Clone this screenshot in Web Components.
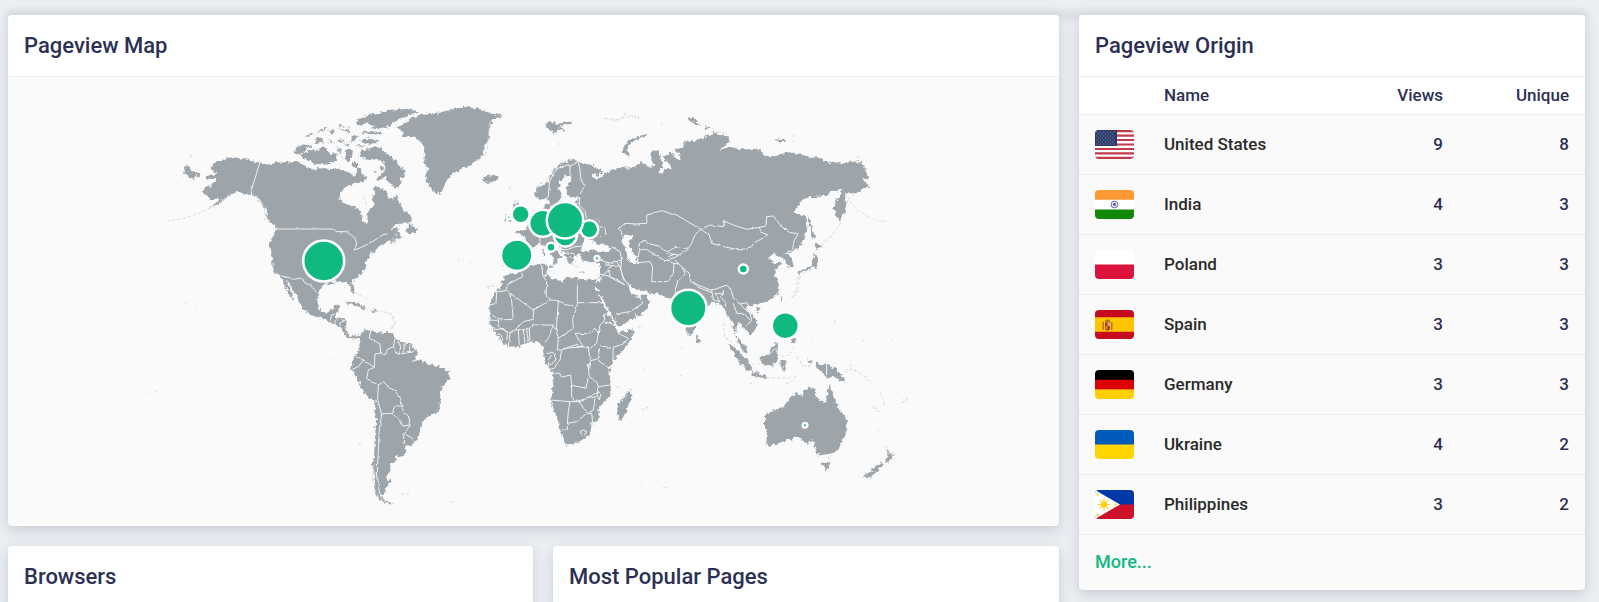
<!DOCTYPE html>
<html lang="en">
<head>
<meta charset="utf-8">
<title>Analytics</title>
<style>
    html {
        overflow: hidden;
    }

    body {
        margin: 0;
        background: #ebeff4;
        font-family: Roboto, "Liberation Sans", sans-serif;
        font-weight: 500;
        color: #2c3154;
    }
</style>
</head>
<body>

<stats-page>
    <stats-card slot="main" heading="Pageview Map">
        <world-map></world-map>
    </stats-card>
    <stats-card slot="half" heading="Browsers"></stats-card>
    <stats-card slot="half" heading="Most Popular Pages"></stats-card>
    <stats-card slot="side" heading="Pageview Origin">
        <origin-table></origin-table>
    </stats-card>
</stats-page>

<template id="stats-page">
    <style>
        :host {
            display: block;
            padding: 0 14px 0 8px;
        }

        .previous {
            height: 0;
            margin-bottom: 15px;
            box-shadow: 0 0 8px 2px rgba(40, 45, 50, .2);
        }

        .columns {
            display: grid;
            grid-template-columns: minmax(0, 1051fr) minmax(0, 506fr);
            gap: 20px;
            align-items: start;
        }

        .left {
            display: grid;
            gap: 20px;
        }

        .halves {
            display: grid;
            grid-template-columns: minmax(0, 525fr) minmax(0, 506fr);
            gap: 20px;
        }
    </style>
    <div class="previous"></div>
    <div class="columns">
        <div class="left">
            <slot name="main"></slot>
            <div class="halves"><slot name="half"></slot></div>
        </div>
        <slot name="side"></slot>
    </div>
</template>

<template id="stats-card">
    <style>
        :host {
            display: block;
            background: #fafafa;
            border-radius: 4px;
            box-shadow: 0 5px 14px rgba(40, 45, 50, .16), 0 0 2px rgba(40, 45, 50, .06);
            overflow: hidden;
        }

        header {
            background: #fff;
            border-bottom: 1px solid #eee;
            padding: 17px 16px 16px;
        }

        h2 {
            margin: 0;
            font-size: 22px;
            line-height: 28px;
            font-weight: 500;
        }
    </style>
    <header><h2></h2></header>
    <slot></slot>
</template>

<template id="origin-table">
    <style>
        :host {
            display: block;
        }

        table {
            width: 100%;
            border-collapse: collapse;
            table-layout: fixed;
            font-size: 17px;
            line-height: 20px;
        }

        th, td {
            box-sizing: border-box;
            padding: 0 16px;
            text-align: left;
            font-weight: 500;
            border-bottom: 1px solid #ececec;
        }

        th {
            height: 37px;
            background: #fff;
        }

        td {
            height: 60px;
        }

        .flag {
            width: 69px;
            padding-right: 0;
        }

        .name {
            color: #2a2a2a;
        }

        .num {
            width: 126px;
            text-align: right;
        }

        footer {
            padding: 15px 16px 16px;
        }

        a {
            color: #10b981;
            font-size: 18px;
            line-height: 24px;
            text-decoration: none;
        }
    </style>
    <table>
        <thead>
            <tr>
                <th class="flag"></th>
                <th>Name</th>
                <th class="num">Views</th>
                <th class="num">Unique</th>
            </tr>
        </thead>
        <tbody></tbody>
    </table>
    <footer><a href="#">More...</a></footer>
</template>

<template id="country-flag">
    <style>
        :host {
            display: block;
            width: 39px;
            height: 29px;
            border-radius: 4px;
            overflow: hidden;
        }

        svg {
            display: block;
            width: 100%;
            height: 100%;
        }
    </style>
    <svg viewBox="0 0 39 29" preserveAspectRatio="none" aria-hidden="true"></svg>
</template>

<template id="world-map">
    <style>
        :host {
            display: block;
        }

        svg {
            display: block;
            width: 100%;
            height: auto;
        }

        .land {
            fill: #9da4aa;
            filter: url(#coast);
        }

        .sea {
            fill: #fafafa;
            filter: url(#coast);
        }

        .border {
            fill: none;
            stroke: #f2f3f3;
            stroke-width: 3;
            stroke-linejoin: round;
            filter: url(#line);
        }

        .faint {
            fill: none;
            stroke: #d6d9db;
            stroke-width: 4;
            stroke-dasharray: 5 3 2 6;
            filter: url(#line);
        }

        .specks {
            fill: none;
            stroke: #e3e5e6;
            stroke-dasharray: 2 3 1 6;
        }

        circle {
            fill: #10b981;
            stroke: #fff;
            stroke-width: 2.5;
        }
    </style>
    <svg viewBox="8 77 1051 449" role="img" aria-label="Pageviews by country">
        <defs>
            <filter id="coast" x="-5%" y="-5%" width="110%" height="110%" color-interpolation-filters="sRGB">
                <feTurbulence type="fractalNoise" baseFrequency=".09" numOctaves="3" seed="4" result="n"/>
                <feDisplacementMap in="SourceGraphic" in2="n" scale="17" xChannelSelector="R" yChannelSelector="G"/>
            </filter>
            <filter id="line" x="-5%" y="-5%" width="110%" height="110%" color-interpolation-filters="sRGB">
                <feTurbulence type="fractalNoise" baseFrequency=".06" numOctaves="1" seed="7" result="n"/>
                <feDisplacementMap in="SourceGraphic" in2="n" scale="9" xChannelSelector="R" yChannelSelector="G"/>
            </filter>
        </defs>

        <!-- North America -->
        <g transform="translate(150 90) scale(.33333)">
            <g class="land">
                <path d="M188 228L200 218 215 212 235 205 252 200 270 206 300 210 330 216 345 222 365 226 380 216 395 218 410 212 425 216 440 216 455 222 475 234 490 238 510 234 530 236 545 238 565 236 585 240 590 250 605 252 615 266 618 250 622 235 632 238 640 254 650 262 645 272 625 278 605 284 585 292 575 310 568 325 580 340 600 346 620 355 632 364 635 380 640 395 648 399 653 385 652 368 665 357 672 342 668 325 674 310 668 292 680 290 695 297 710 302 716 325 730 328 738 312 746 330 755 348 760 362 775 370 788 382 783 396 760 400 735 406 715 420 735 416 750 412 742 428 760 440 745 446 725 460 715 452 705 458 690 468 680 482 665 488 655 505 645 522 650 532 640 546 625 558 610 568 607 582 613 592 615 608 611 612 603 598 600 583 590 575 575 578 555 573 545 580 530 578 515 588 506 605 502 620 503 640 510 660 525 670 542 665 552 648 570 645 566 660 558 670 558 685 588 688 590 700 586 718 595 732 605 740 620 735 628 745 615 746 595 742 580 725 568 710 550 700 530 692 515 685 495 680 475 670 455 655 452 640 440 620 425 595 415 575 406 563 414 585 428 610 430 630 418 615 408 592 398 575 393 558 375 548 368 530 366 510 360 480 358 460 368 440 376 425 378 415 365 400 355 390 350 370 345 350 330 330 315 318 300 314 285 312 265 306 250 310 235 318 222 330 205 342 178 354 200 338 206 325 185 328 172 320 160 305 165 292 185 285 200 275 195 268 168 266 170 258 195 255 200 248 183 238 185 228zM108 226L118 230 130 244 148 250 145 258 135 260 132 270 122 262 102 248z"/>
                <path d="M680 172L695 178 710 190 730 203 742 222 768 242 762 260 748 262 755 285 738 294 720 282 705 262 690 268 678 270 695 250 708 238 700 220 682 206 665 208 640 204 628 196 634 178 650 184 662 172zM475 182L500 178 525 172 540 192 560 190 558 212 530 224 500 222 472 214 462 204 450 196zM430 190L440 168 462 163 486 168 466 180 450 196zM655 75L710 64 770 56 806 64 780 76 742 92 714 108 690 118 662 118 676 105 645 100 625 110 618 98 640 82zM620 84L645 80 650 96 632 104zM640 122L700 126 690 134 635 130zM635 150L690 150 680 160 640 160zM590 180L604 176 606 202 596 218 584 206zM605 138L622 140 612 152 604 160zM562 172L575 180 572 192 560 182zM495 146L515 142 520 156 498 160zM460 140L492 128 480 140zM500 122L532 112 525 122zM555 148L585 150 570 158zM538 120L556 122 545 134zM690 230L702 230 698 244zM564 104L584 106 570 112zM570 118L600 116 598 128zM535 148L550 152 545 160zM615 165L645 166 640 172zM610 216L625 220 622 235 608 228zM640 140L665 140 660 146zM585 160L596 162 592 172zM670 240L680 245 672 250z"/>
                <path d="M735 115L765 100 785 85 810 72 860 68 890 62 940 50 980 55 1005 62 1030 75 1060 76 1030 88 1022 105 1015 125 1018 145 1005 165 1002 185 992 203 980 210 965 225 940 232 925 245 905 255 890 270 880 290 873 312 855 305 840 295 830 275 825 255 835 235 820 215 825 195 822 175 812 155 795 140 775 138 755 138 762 125zM998 262L1012 258 1030 254 1046 262 1035 272 1015 280 1002 272zM785 396L790 412 800 418 798 430 782 428 766 428 776 410zM585 635L605 635 625 642 650 655 640 657 620 648 590 640zM660 660L680 658 688 664 668 666zM120 195L130 197 122 200z"/>
            </g>
            <path class="border" d="M330 216L300 314M380 417H548L560 425 590 425 605 436 616 446 620 462 612 480 630 474 650 464 675 450 695 436 712 430M394 558L415 562 430 568 455 564 466 580 480 580 488 595 500 606M540 692L545 675 556 672M560 688L552 698M588 690L568 700 572 708"/>
            <path class="faint" d="M52 395L100 385 150 368 200 345M318 318L335 340 350 380 356 396M322 330L345 355 346 390M108 226L96 262M600 600L640 620 655 628M700 665L728 675 735 700 725 715M750 400L738 432 720 462 745 446 765 440M640 320L652 350M470 138L540 118 600 110M500 160L580 156 640 150M560 170L580 210M1020 90L1010 190 980 212M822 190L830 250M210 340L240 312"/>
        </g>

        <!-- South America -->
        <g transform="translate(330 310) scale(.33333)">
            <path class="land" d="M105 60L120 58 135 65 165 68 190 70 195 85 215 98 245 103 262 125 258 148 300 162 335 172 355 185 358 205 345 222 332 240 332 275 322 305 305 315 285 325 275 340 272 365 262 385 248 405 225 408 230 425 222 437 198 440 195 458 180 460 185 475 175 490 170 505 182 515 170 530 165 550 150 555 165 570 190 580 170 580 145 565 132 530 137 505 128 470 133 430 135 380 138 330 135 275 115 262 98 240 85 215 72 190 63 175 68 155 75 135 88 120 90 75z"/>
            <path class="border" d="M122 60L118 85 138 95 150 102 152 130 135 132 133 172 100 150 75 135M100 150L85 170 68 178M133 172L115 180 110 205 130 218 145 225 162 215 175 232 195 242 212 265 216 288 195 288 185 310 155 312 143 270 145 225M135 275H142M150 125L165 135 172 118 190 110 195 85M190 110L202 132 225 130 248 125 258 118M202 95L212 110 208 130M222 100L222 128M240 102L238 128M216 288L220 305 235 318 242 345 218 348 212 332 185 310M242 345L222 370 220 400M222 370L250 388M155 312L148 360 145 420 142 480 145 530 152 560M245 155L258 148 270 150"/>
            <path class="faint" d="M132 460L128 510 138 550 165 578M128 470L145 520M215 552H238M360 574L372 580M130 0L180 10 195 40 180 58M88 398V402"/>
        </g>

        <!-- Europe and Turkey -->
        <g transform="translate(470 90) scale(.33333)">
            <g class="land">
                <path d="M197 322L195 300 215 288 235 275 245 250 260 232 280 215 305 208 330 215 350 222 385 235 398 248 380 255 362 250 372 268 390 262 410 250 425 240 440 235 470 232 470 480 440 488 430 492 415 515 392 520 360 516 335 510 332 490 322 492 312 500 305 525 290 505 276 478 258 462 245 462 262 485 278 500 266 506 255 525 248 500 228 468 205 462 186 475 180 520 160 540 105 536 100 505 108 462 165 462 168 445 140 424 165 418 185 402 205 385 216 360 230 340 240 345 245 365 280 350 310 345 328 322 300 322 290 310 290 290 306 262 290 255 270 275 266 300 276 318 262 340 245 352 234 335 232 320 215 332z"/>
                <path d="M133 335L148 335 150 355 172 380 170 395 135 400 145 378 132 355zM108 370L125 372 120 392 105 392zM225 100L250 96 262 102 290 96 305 95 300 102 275 104 268 112 290 124 265 118 255 132 242 120 228 112zM218 475L223 480 222 500 217 495zM235 525L250 528 248 536zM325 545L345 547 340 551z"/>
            </g>
            <path class="sea" d="M335 470L345 442 362 448 370 458 382 452 380 462 405 460 422 475 424 484 400 486 370 480 345 486 334 486z"/>
            <path class="border" d="M235 322L238 280 250 250 270 230 300 228 325 215M300 228V258M325 215L330 240 332 265 346 288 330 312M305 322L328 325 328 345 345 362 350 385M300 335L325 342M380 385L405 410 408 430 390 440M210 462V440M275 478L290 480 315 470 335 468M285 490L312 490M165 462L190 472M420 474L445 480 460 500 440 515M425 490L445 492 440 515 395 522"/>
            <path class="faint" d="M410 88L440 92 470 80 510 84M200 290L230 270 250 240 300 206M285 470L300 500 320 520M290 510L330 538M120 290L125 305M50 590L75 585M268 160V164"/>
        </g>

        <!-- Asia -->
        <g transform="translate(600 100) scale(.33333)">
            <g class="land">
                <path d="M0 235L20 225 60 205 100 202 122 186 150 203 165 195 155 180 150 165 158 152 175 152 178 170 190 190 188 205 175 215 185 222 195 205 222 208 212 195 200 185 190 170 200 160 215 158 235 180 242 178 235 160 220 150 250 142 255 125 290 120 320 110 340 98 355 103 385 110 388 122 375 135 358 150 390 140 420 148 455 150 480 148 490 165 510 172 530 168 555 158 580 158 610 165 640 175 665 175 685 190 700 185 735 190 760 183 785 190 798 212 805 238 785 235 800 252 812 260 795 262 770 280 735 280 738 310 735 335 722 362 708 345 700 325 705 305 718 290 728 265 710 275 695 268 685 285 655 290 612 292 600 310 582 335 605 345 620 355 622 385 615 410 600 435 585 450 565 460 578 485 580 502 570 508 560 490 552 474 535 472 525 460 505 475 520 490 545 488 525 510 530 535 538 560 535 575 515 595 490 608 470 612 450 620 442 610 435 625 452 640 468 660 470 682 452 705 442 692 430 682 415 665 410 682 408 705 425 725 438 755 425 745 410 720 402 695 400 670 390 652 380 645 375 625 360 610 340 605 325 615 315 635 290 670 280 695 272 712 260 690 245 655 215 620 210 590 200 595 180 582 150 578 130 570 105 568 80 545 84 560 98 584 120 592 130 580 152 605 130 640 55 682 45 660 15 610 -15 550 -2 545 0 520 0 480 40 440 15 425 0 400z"/>
                <path d="M65 160L72 140 85 120 110 110 145 102 140 108 110 118 92 130 80 150 88 168zM622 345L630 360 636 385 648 415 638 412 632 390 625 370zM645 430L665 437 655 445 645 442zM645 460L652 480 648 500 625 510 610 514 600 520 598 530 594 518 610 506 630 502 638 485zM262 55L280 50 290 65 305 75 290 75 270 64zM312 78L335 82 318 88zM525 118L545 116 565 122 550 126 530 124zM575 122L597 126 585 126zM0 205L10 212 0 225z"/>
            </g>
            <path class="sea" d="M65 415L80 405 98 408 85 425 95 450 108 470 110 490 95 488 82 470 78 445 68 430z"/>
            <path class="border" d="M68 408L58 385 75 370 110 372 140 370 140 345 185 332 230 345 275 372 302 388 285 405 275 430 265 445 225 440 205 455 190 450 178 438 150 432 135 420 118 428V450L140 448 160 462 195 482 225 472 265 448M112 488L150 485 158 500 155 545 200 545 220 520 222 490 200 482M112 488L118 452M302 388L330 375 370 380 370 362 400 375 440 388 478 382 480 395 505 405 460 430 455 440 420 450 370 440 335 430 328 405 302 388M478 382L498 378 500 350 520 348 545 380 570 398 592 400 580 430 578 448 550 462M225 480L245 500 268 520 272 545 330 570 345 568 380 555 395 572 400 595M245 500L255 520 235 540 222 580M222 490L235 492M280 545L290 560 335 578M335 570L340 600 360 605 345 580 372 582M372 570L365 590 378 620M400 595L420 612 440 608M400 610L410 640 432 640 450 660M420 612L432 625 450 640 455 660 440 678M35 440L60 455 65 480 62 510 75 545M0 480L30 490 65 480M0 535L30 505 40 490M20 525L45 540 75 555M48 642L90 635 128 610 120 592M105 640L112 655M0 380L15 385 18 405M200 460L235 465M205 470L225 462"/>
            <path class="faint" d="M15 55L60 58 75 42 120 52M735 280L770 330 820 358 860 365M722 370L700 400 665 435M600 530L590 570 570 595M740 300L745 320M350 98L380 100M185 70V74M775 168V172M582 105V110"/>
        </g>

        <!-- Africa -->
        <g transform="translate(480 250) scale(.33333)">
            <path class="land" d="M75 78L90 68 115 70 140 50 190 40 200 45 205 60 195 75 225 88 245 95 258 80 290 85 330 90 352 88 345 102 355 130 370 165 385 190 400 220 415 245 435 245 462 238 455 265 435 295 400 330 388 355 390 385 393 430 375 455 355 475 358 505 340 520 325 555 300 575 258 585 248 565 240 540 230 500 212 455 220 410 215 365 195 335 190 290 175 275 150 275 120 288 85 290 60 270 40 240 28 220 30 190 28 165 40 135 60 110zM450 418L456 435 445 465 430 508 418 512 411 490 415 460 432 445z"/>
            <path class="border" d="M125 68L128 80 80 105 78 122 50 125 48 160 30 165M80 122L160 180 212 150 198 135 200 95 188 75 185 45M93 130L100 208 60 210 35 195M160 180L160 208 130 215 105 240 90 250M212 150L232 152 290 175 292 160 292 85M292 158H368M290 175L278 205 280 235 235 265 228 240 232 200 235 152M160 225H220L228 240M220 225L205 265 195 278M235 265L232 300 245 300 285 285 310 290 285 250M285 250L300 250 325 252 345 235 355 250 350 280 330 295M355 250L360 225 372 215 408 225M372 215L370 195 380 190M360 290L385 295 400 292 430 282 445 265 415 250 410 235M400 292L398 335M355 295L358 325 332 332 325 350 328 380 350 395 355 410 390 405M355 332L388 355M245 300L240 330 220 355 205 360M250 295L325 290 330 330M195 310H225L228 330 210 345 205 330 215 315M215 368L240 370 242 382 272 375 275 405 318 415 325 385M275 405V440L285 455 325 445 345 430 355 430M212 450L270 455 300 455M270 455L265 485 262 520 262 540 245 540M262 520L290 515 320 490 335 490 338 520M300 455L310 475 325 488 340 480 345 445M325 445L350 440M355 410L350 430 358 450 363 435 352 425M30 210L55 212 60 235 90 248M30 230L45 235M40 240L70 235 82 250 80 270M52 255Q60 245 66 262T56 268M90 250L85 288M115 240L118 285M130 240L135 280M140 240L145 275M148 235L150 272M105 240L145 238 160 225M300 545L310 540 320 548 312 555 303 550zM330 520L338 517 338 527 332 528zM320 345L332 340 330 352zM385 60L392 80 435 105M360 72L392 80M410 35L420 50 430 85 440 98M375 45L420 48"/>
            <path class="faint" d="M20 112L42 108M410 410L425 415M485 480L505 472M475 230H485M490 355V358M95 440H98"/>
        </g>

        <!-- South-East Asia and Oceania -->
        <g transform="translate(660 240) scale(.33333)">
            <path class="land" d="M315 530L325 518 370 500 385 480 410 460 425 468 430 450 450 442 465 448 465 465 480 480 497 487 503 460 508 432 515 455 525 480 530 498 545 515 562 545 560 575 545 605 525 638 505 642 485 645 468 640 465 615 455 600 442 615 430 600 405 592 380 600 355 610 330 618 318 612 322 590 315 560zM488 668L511 668 506 688 494 690zM682 625L688 642 703 645 690 665 675 668 682 650zM660 668L670 676 642 704 622 717 611 711 638 688zM465 368L485 372 500 375 530 388 545 405 555 430 535 420 520 408 500 418 490 400 470 385zM440 358L458 362 455 370 442 366zM297 350L320 345 345 308 356 314 350 330 352 355 340 378 305 372zM205 312L227 325 257 355 278 382 275 394 260 390 238 365zM243 308L258 320 264 342 248 334zM273 396L320 406 320 415 276 408zM360 363L370 362 382 365 374 374 378 392 364 390zM108 283L120 295 118 308 108 307zM288 203L299 207 294 218zM361 167L367 175 362 187zM390 300L408 292 404 310 394 306z"/>
            <path class="border" d="M500 370V418M302 345L330 342 345 325"/>
            <path class="faint" d="M190 250L195 290 215 310M320 412L380 415 410 408M378 430L405 420M365 348L392 345 398 322M410 350L430 378 460 380M555 395L575 388 570 375M585 390L620 415 635 432M640 500L660 520M660 455L675 500M728 488L745 475M10 742H22M525 240L520 255M610 300V304M655 570V574M695 298V302M415 150L400 175M65 320V324M60 405V409M270 430H275M355 370L372 382M415 112L405 140M678 618L686 630M472 645L476 655M505 652L510 665M458 295V299"/>
        </g>

        <!-- specks of the Pacific and the southern oceans -->
        <path class="specks" d="M184 303L197 309M143 393L160 391M330 357L335 360M458 260L472 263M892 390L908 402M870 470L876 472M162 470L165 472M640 485H642"/>

        <g id="pins"></g>
    </svg>
</template>

<script>
const flags = {
    us: `<path fill="#fff" d="M0 0h39v29H0z"/>
        <path stroke="#c23b4b" stroke-width="2.23" d="M0 1.1h39M0 5.6h39M0 10h39M0 14.5h39M0 19h39M0 23.4h39M0 27.9h39"/>
        <path fill="#2b3a67" d="M0 0h22v16H0z"/>
        <path stroke="#8d98b8" stroke-dasharray="1 2.4" d="M1.5 2h19.5M3.2 4h17M1.5 6h19.5M3.2 8h17M1.5 10h19.5M3.2 12h17M1.5 14h19.5"/>`,
    in: `<path fill="#ff9933" d="M0 0h39v10H0z"/><path fill="#fff" d="M0 9.7h39v10H0z"/><path fill="#128807" d="M0 19.4h39V29H0z"/>
        <circle cx="19.5" cy="14.5" r="3.4" fill="#e8e8f6" stroke="#6a6abb"/><circle cx="19.5" cy="14.5" r="1.4" fill="#4a4aa8"/>`,
    pl: `<path fill="#fff" d="M0 0h39v15H0z"/><path fill="#dc143c" d="M0 14.5h39V29H0z"/>`,
    es: `<path fill="#c60b1e" d="M0 0h39v29H0z"/><path fill="#ffc400" d="M0 7.25h39v14.5H0z"/>
        <path fill="#b8722c" d="M7.5 12h1.500v8H7.5zM16 12h1.500v8H16zM10 10.500l2.500-1.500 2.500 1.500v1.500h-5z"/>
        <path fill="#ad3519" d="M10 12.5h5v5q0 3-2.5 3t-2.5-3z"/><path fill="#c9a7b8" d="M12.5 13H15v3h-2.5z"/><path fill="#e08a1c" d="M10.5 16h2v3h-2z"/>`,
    de: `<path d="M0 0h39v10H0z"/><path fill="#d00" d="M0 9.7h39v10H0z"/><path fill="#ffce00" d="M0 19.4h39V29H0z"/>`,
    ua: `<path fill="#005bbb" d="M0 0h39v15H0z"/><path fill="#ffd500" d="M0 14.5h39V29H0z"/>`,
    ph: `<path fill="#0038a8" d="M0 0h39v15H0z"/><path fill="#ce1126" d="M0 14.5h39V29H0z"/><path fill="#fff" d="M0 0l25 14.5L0 29z"/>
        <circle cx="9" cy="14.5" r="3" fill="#fcd116"/>
        <path stroke="#fcd116" stroke-width="1.2" d="M9 8.5v12M3 14.5h12M4.8 10.3l8.4 8.400M13.2 10.3l-8.4 8.4"/>
        <path fill="#fcd116" d="M1.5 3.5h2v2h-2zM1.5 24h2v2h-2zM19.5 13.5h2v2h-2z"/>`
};

const origins = [
    ['us', 'United States', 9, 8],
    ['in', 'India', 4, 3],
    ['pl', 'Poland', 3, 3],
    ['es', 'Spain', 3, 3],
    ['de', 'Germany', 3, 3],
    ['ua', 'Ukraine', 4, 2],
    ['ph', 'Philippines', 3, 2]
];

// x, y, radius
const pins = [
    [323.7, 261, 20.5],
    [520.7, 214.3, 9],
    [542.7, 223.3, 13.5],
    [565.3, 235, 11.5],
    [589.3, 229.3, 9],
    [565, 220.3, 18.2],
    [551, 247.3, 4.5],
    [516.7, 255.3, 15.7],
    [508.7, 217.3, 2],
    [597, 258.3, 2.4],
    [743.3, 269, 4.5],
    [688.3, 308, 18.2],
    [785.3, 325.7, 13.5],
    [805, 425.3, 2.3]
];

class BaseElement extends HTMLElement {
    constructor() {
        super();
        const template = document.getElementById(this.localName);
        this.attachShadow({ mode: 'open' });
        this.shadowRoot.appendChild(template.content.cloneNode(true));
    }
}

class StatsPage extends BaseElement {}

class StatsCard extends BaseElement {
    connectedCallback() {
        this.shadowRoot.querySelector('h2').textContent = this.getAttribute('heading');
    }
}

class CountryFlag extends BaseElement {
    connectedCallback() {
        this.shadowRoot.querySelector('svg').innerHTML = flags[this.getAttribute('code')];
    }
}

class OriginTable extends BaseElement {
    connectedCallback() {
        this.shadowRoot.querySelector('tbody').innerHTML = origins.map(([code, name, views, unique]) => `
            <tr>
                <td class="flag"><country-flag code="${code}"></country-flag></td>
                <td class="name">${name}</td>
                <td class="num">${views}</td>
                <td class="num">${unique}</td>
            </tr>`).join('');
    }
}

class WorldMap extends BaseElement {
    connectedCallback() {
        this.shadowRoot.querySelector('#pins').innerHTML = pins
            .map(([x, y, r]) => `<circle cx="${x}" cy="${y}" r="${r}"/>`).join('');
    }
}

customElements.define('stats-page', StatsPage);
customElements.define('stats-card', StatsCard);
customElements.define('country-flag', CountryFlag);
customElements.define('origin-table', OriginTable);
customElements.define('world-map', WorldMap);
</script>
</body>
</html>
